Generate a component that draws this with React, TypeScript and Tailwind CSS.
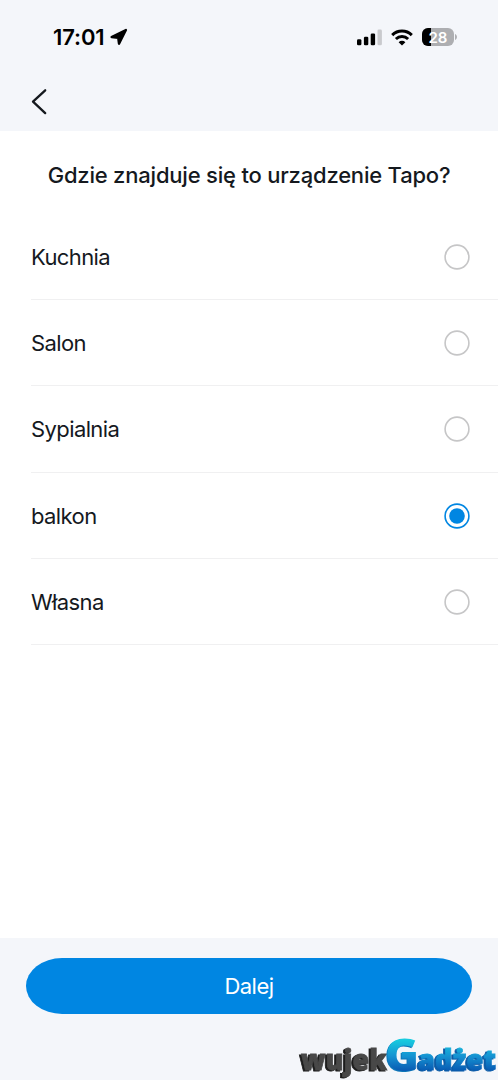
import { useState } from 'react';

const rooms = ['Kuchnia', 'Salon', 'Sypialnia', 'balkon', 'Własna'];

function StatusBar() {
  return (
    <div className="flex h-[74px] items-center justify-between pl-[53px] pr-[41px]">
      <div className="flex items-center gap-[5px]">
        <span className="w-[52px] whitespace-nowrap text-[22px] font-semibold leading-6 tracking-[-0.1px] text-black">17:01</span>
        <svg className="h-[18px] w-[18px]" viewBox="0 0 18 18">
          <path d="M15.9 2 L9 15.7 L8.2 9.7 L1.6 9 Z" fill="#000" stroke="#000" strokeWidth="2.4" strokeLinejoin="round" />
        </svg>
      </div>
      <div className="flex items-center">
        <svg className="h-[17px] w-[25px]" viewBox="0 0 25 17">
          <rect x="0" y="10.3" width="4.4" height="6" rx="1.3" fill="#000" />
          <rect x="6.9" y="7.7" width="4.4" height="8.6" rx="1.3" fill="#000" />
          <rect x="13.7" y="4.4" width="4.4" height="11.9" rx="1.3" fill="#000" />
          <rect x="20.5" y="0.6" width="4.4" height="15.7" rx="1.3" fill="#c9cacd" />
        </svg>
        <svg className="ml-[9px] h-[17px] w-[22px]" viewBox="0 0 22 17">
          <g fill="none" stroke="#000" strokeWidth="3">
            <path d="M1.2 6.1 A14 14 0 0 1 20.8 6.1" />
            <path d="M4.9 10 A8.8 8.8 0 0 1 17.1 10" />
          </g>
          <path d="M11 16.6 L7.6 13.2 A4.9 4.9 0 0 1 14.4 13.2 Z" fill="#000" />
        </svg>
        <div className="relative ml-[9px] flex h-[18px] w-[32px] items-center justify-center overflow-hidden rounded-[6px] bg-[#adaeb1]">
          <div className="absolute left-0 top-0 h-full w-[9px] bg-black" />
          <span className="relative text-[15px] font-semibold leading-none text-white">28</span>
        </div>
        <svg className="ml-px h-[6px] w-[2px]" viewBox="0 0 2 6">
          <path d="M0 0 C2.6 1 2.6 5 0 6 Z" fill="#adaeb1" />
        </svg>
      </div>
    </div>
  );
}

function Radio({ checked }: { checked: boolean }) {
  return (
    <svg className="h-[26px] w-[26px]" viewBox="0 0 26 26" fill="none">
      <circle cx="13" cy="13" r="11.9" stroke={checked ? '#0086e2' : '#c6c6c7'} strokeWidth="1.6" />
      {checked && <circle cx="13" cy="13" r="7.8" fill="#0086e2" />}
    </svg>
  );
}

function Watermark() {
  return (
    <svg className="h-[44px] w-[200px] overflow-visible" viewBox="0 0 200 44" fontFamily="'Open Sans', 'Noto Sans', sans-serif" fontWeight="800">
      <defs>
        <linearGradient id="gadzet" gradientUnits="userSpaceOnUse" x1="0" y1="4" x2="0" y2="36">
          <stop offset="0" stopColor="#19cbdf" />
          <stop offset="0.5" stopColor="#1593d2" />
          <stop offset="1" stopColor="#0755b0" />
        </linearGradient>
      </defs>
      <text className="drop-shadow-[-1.5px_1px_0_#1c1c1c]" x="3" y="34" fontSize="28" textLength="86" lengthAdjust="spacingAndGlyphs" fill="#484848" stroke="#484848" strokeWidth="0.8">wujek</text>
      <text className="drop-shadow-[-1.5px_1px_0_#0b5ba6]" x="120" y="34" fontSize="28" textLength="78" lengthAdjust="spacingAndGlyphs" fill="url(#gadzet)" stroke="url(#gadzet)" strokeWidth="0.8">adżet</text>
      <text className="drop-shadow-[-1px_1px_0_#0e76b8]" x="87" y="35" fontSize="44" textLength="34" lengthAdjust="spacingAndGlyphs" fill="url(#gadzet)">G</text>
    </svg>
  );
}

export default function App() {
  const [selected, setSelected] = useState('balkon');

  return (
    <div className="flex h-[1080px] w-[498px] flex-col overflow-hidden bg-white font-['Inter','Noto_Sans',sans-serif] text-[#15191e]">
      <header className="h-[131px] shrink-0 bg-[#f4f6fa]">
        <StatusBar />
        <button className="ml-[31px] mt-[14px] block" aria-label="Wstecz">
          <svg className="h-[27px] w-[17px]" viewBox="0 0 17 27" fill="none" stroke="#15191e" strokeWidth="2.3" strokeLinecap="round" strokeLinejoin="round">
            <path d="M14.2 2.3 L2 13.7 L14.2 25.1" />
          </svg>
        </button>
      </header>

      <main className="flex-1">
        <h1 className="flex h-[83px] items-center justify-center pt-[4px] text-[22px] font-medium leading-7 tracking-[-0.2px] whitespace-nowrap">
          Gdzie znajduje się to urządzenie Tapo?
        </h1>
        <ul className="pl-[31px]">
          {rooms.map((room) => (
            <li
              key={room}
              onClick={() => setSelected(room)}
              className="flex h-[86.2px] items-center justify-between border-b border-[#f0f0f1] pr-[28px] pt-px"
            >
              <span className="text-[22px] leading-7 tracking-[-0.6px]">{room}</span>
              <Radio checked={selected === room} />
            </li>
          ))}
        </ul>
      </main>

      <footer className="flex h-[142px] shrink-0 flex-col bg-[#f4f6fa] pt-5">
        <button className="mx-[26px] h-14 shrink-0 rounded-[36px/28px] bg-[#0086e2] text-[22px] tracking-[-0.5px] text-white">
          Dalej
        </button>
        <div className="mt-[22px] flex justify-end">
          <Watermark />
        </div>
      </footer>
    </div>
  );
}
